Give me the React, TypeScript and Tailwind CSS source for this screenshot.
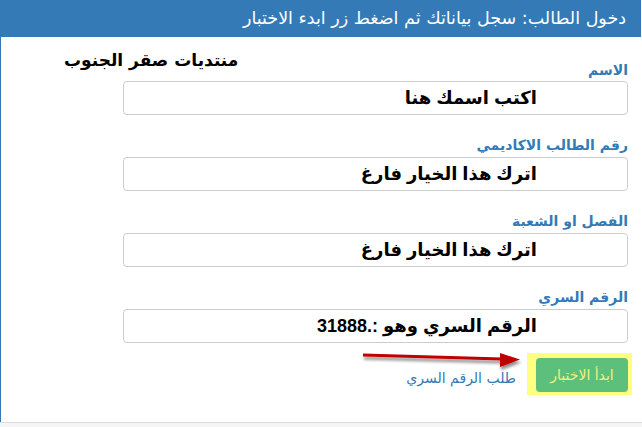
import React from "react";

const fields = [
  { label: "الاسم", value: "اكتب اسمك هنا" },
  { label: "رقم الطالب الاكاديمي", value: "اترك هذا الخيار فارغ" },
  { label: "الفصل او الشعبة", value: "اترك هذا الخيار فارغ" },
  { label: "الرقم السري", value: "الرقم السري وهو :.31888" },
];

export default function App() {
  return (
    <div
      className="relative w-[642px] h-[427px] overflow-hidden bg-white"
      style={{ fontFamily: '"DejaVu Sans", "Liberation Sans", sans-serif' }}
    >
      <div dir="rtl" className="w-[641px] border-l border-[#337ab7] flex flex-col">
        <div className="h-[37px] w-[640px] bg-[#337ab7] text-white text-[17.5px] flex items-center pr-[15px]">
          دخول الطالب: سجل بياناتك ثم اضغط زر ابدء الاختبار
        </div>
        <div className="h-[385px] flex flex-col pr-[13px] pl-[122px]">
          {fields.map((f, i) => (
            <div key={i} className={i === 0 ? "flex flex-col" : "flex flex-col mt-[20px]"}>
              {i === 0 ? (
                <div className="flex justify-between items-start h-[44px]">
                  <div className="self-end h-[20px] mb-[1px] leading-[20px] text-[14px] font-bold text-[#337ab7]">
                    {f.label}
                  </div>
                  <div className="-ml-[59px] mt-[11px] text-[17px] leading-[24px] font-bold text-black">
                    منتديات صقر الجنوب
                  </div>
                </div>
              ) : (
                <div className="h-[20px] mb-[2px] leading-[20px] text-[14px] font-bold text-[#337ab7]">
                  {f.label}
                </div>
              )}
              <div
                className="h-[34px] border border-[#cccccc] rounded-[4px] flex items-center pr-[90px] text-[18px] font-bold text-black"
                style={{ fontFamily: '"Liberation Sans", "DejaVu Sans", sans-serif' }}
              >
                {f.value}
              </div>
            </div>
          ))}
          <div className="flex items-end mt-[10px] -ml-[4px] -mr-[4px]">
            <div className="bg-[#ffff80] pr-[4px] pl-[9px] pt-[5px] pb-[3px]">
              <div className="w-[92px] h-[34px] rounded-[4px] bg-[#5cbf7c] text-[#f2f27e] text-[14px] flex items-center justify-center">
                ابدأ الاختبار
              </div>
            </div>
            <div className="mr-[11px] mb-[7px] text-[14px] leading-[20px] text-[#337ab7]">
              طلب الرقم السري
            </div>
          </div>
        </div>
      </div>
      <div className="h-[5px] border-t border-[#dddddd] bg-[#f5f5f5]" />
      <svg
        className="absolute left-[358px] top-[346px]"
        width="170"
        height="30"
        viewBox="0 0 170 30"
      >
        <defs>
          <filter id="sh" x="-10%" y="-50%" width="120%" height="200%">
            <feDropShadow dx="1" dy="3" stdDeviation="1.5" floodColor="#000" floodOpacity="0.45" />
          </filter>
        </defs>
        <g filter="url(#sh)">
          <line x1="5" y1="9" x2="144" y2="13" stroke="#c00000" strokeWidth="3" />
          <polygon points="142,7 162,13.5 142,21" fill="#c00000" />
        </g>
      </svg>
    </div>
  );
}
